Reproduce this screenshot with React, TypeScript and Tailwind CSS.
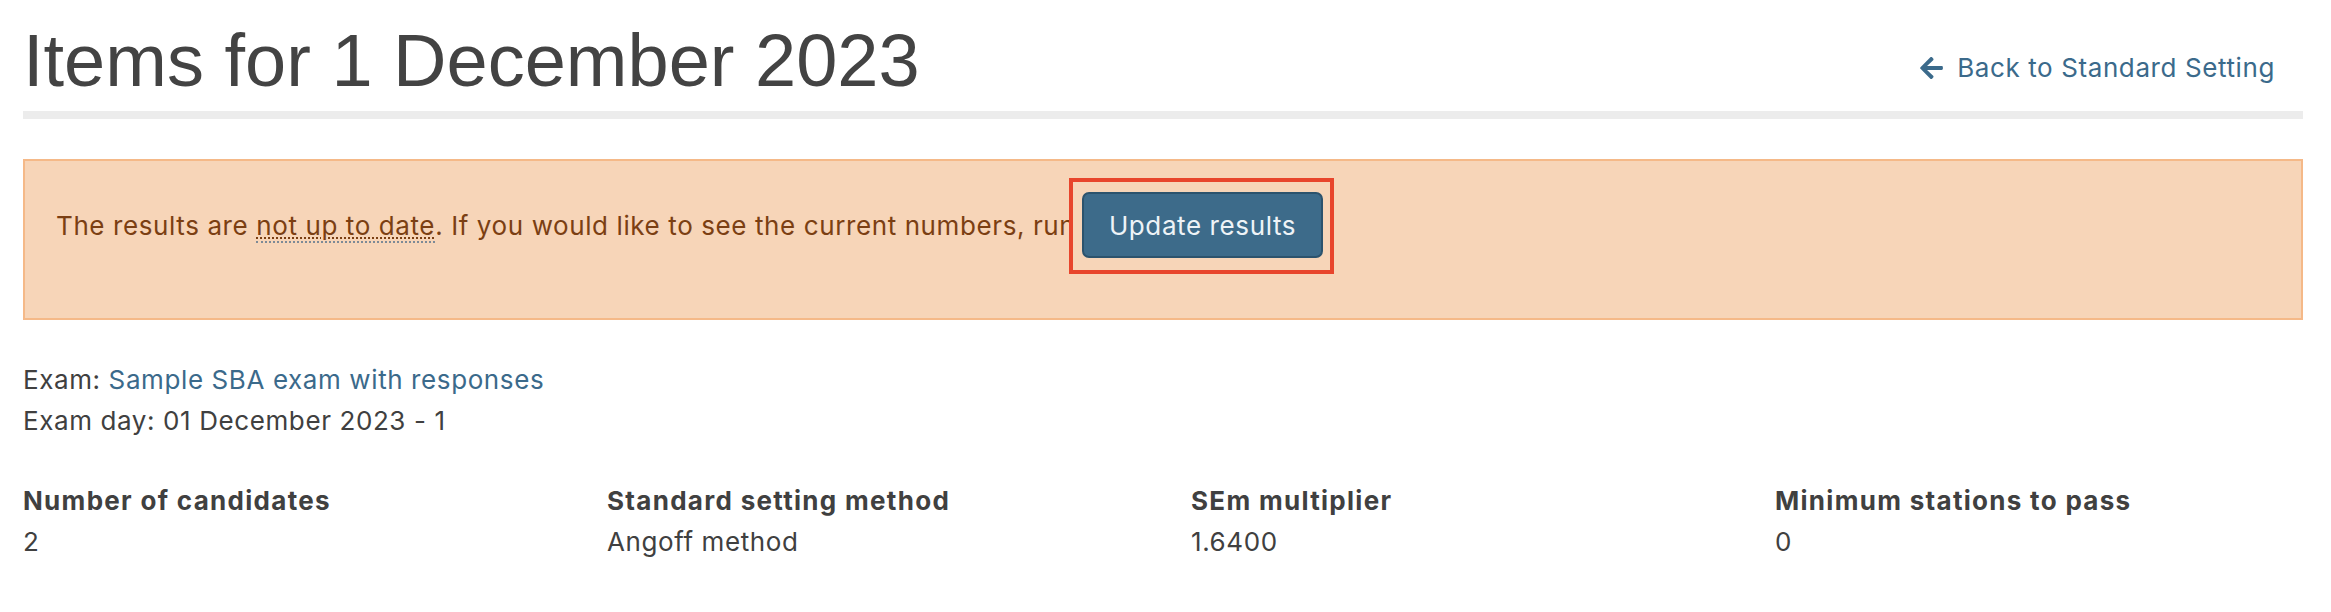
import React from "react";

const stats = [
  { label: "Number of candidates", value: "2" },
  { label: "Standard setting method", value: "Angoff method" },
  { label: "SEm multiplier", value: "1.6400" },
  { label: "Minimum stations to pass", value: "0" },
];

function ArrowLeft() {
  return (
    <svg width="23" height="26" viewBox="0 0 448 512" fill="currentColor" aria-hidden="true">
      <path d="M257.5 445.1l-22.2 22.2c-9.4 9.4-24.6 9.4-33.9 0L7 273c-9.4-9.4-9.4-24.6 0-33.9L201.4 44.7c9.4-9.4 24.6-9.4 33.9 0l22.2 22.2c9.5 9.5 9.3 25-.4 34.3L136.6 216H424c13.3 0 24 10.7 24 24v32c0 13.3-10.7 24-24 24H136.6l120.5 114.8c9.8 9.3 10 24.8.4 34.3z" />
    </svg>
  );
}

export default function App() {
  return (
    <div className="min-h-screen bg-white pl-[23px] pr-[28px] font-['Inter',sans-serif] text-[26px] leading-[41px] tracking-[0.6px] text-[#404040]">
      <header className="flex items-start justify-between border-b-[8px] border-[#ececec] pt-[24px] pb-[13px]">
        <h1 className="font-['Liberation_Sans',Arial,sans-serif] text-[74px] leading-[74px] font-normal tracking-normal text-[#434343]">
          Items for 1 December 2023
        </h1>
        <a href="#" className="mt-[23px] mr-[28px] flex items-center gap-[14px] text-[#3b6a8b]">
          <ArrowLeft />
          <span>Back to Standard Setting</span>
        </a>
      </header>

      <div className="mt-[40px] border-2 border-[#f5b988] bg-[#f7d5b8] pl-[31px] pt-[17px] pb-[44px] pr-4">
        <div className="flex items-baseline">
          <span className="w-[1013px] shrink-0 overflow-hidden whitespace-nowrap text-[#7b3f13]">
            The results are{" "}
            <abbr
              title="The results were calculated before the latest changes"
              className="border-b-2 border-dotted border-[#7d8a96] no-underline"
            >
              <span className="underline decoration-dotted decoration-2 underline-offset-[3px]">not up to date</span>
            </abbr>
            . If you would like to see the current numbers, run
          </span>
          <span className="border-4 border-[#e8452c] pl-[9px] pr-[7px] pt-[10px] pb-[12px]">
            <button
              type="button"
              className="h-[66px] w-[241px] rounded-[7px] border-2 border-[#2c536d] bg-[#3d6b8a] text-[26px] tracking-[0.6px] text-[#eef3f7]"
            >
              Update results
            </button>
          </span>
        </div>
      </div>

      <div className="mt-[39px]">
        <div>
          Exam: <a href="#" className="text-[#3b6a8b]">Sample SBA exam with responses</a>
        </div>
        <div>Exam day: 01 December 2023 - 1</div>
      </div>

      <div className="mt-[39px] grid grid-cols-[repeat(4,584px)]">
        {stats.map((s) => (
          <div key={s.label}>
            <div className="font-bold tracking-[1.3px]">{s.label}</div>
            <div>{s.value}</div>
          </div>
        ))}
      </div>
    </div>
  );
}
